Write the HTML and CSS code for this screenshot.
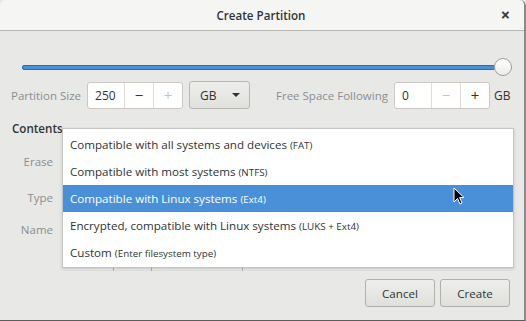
FILE: index.html
```html
<!DOCTYPE html>
<html lang="en">
<head>
  <meta charset="UTF-8" />
  <title>Create Partition</title>
  <link rel="stylesheet" href="styles.css">
</head>
<body>
  <div class="window">
    <div class="titlebar">
      <span class="title">Create Partition</span>
      <span class="close">&#x2715;</span>
    </div>

    <div class="content">
      <div class="slider">
        <div class="track"></div>
        <div class="thumb"></div>
      </div>

      <div class="size-row">
        <span class="label">Partition Size</span>
        <div class="spin">
          <span class="value">250</span>
          <span class="spin-btn">&minus;</span>
          <span class="spin-btn off">+</span>
        </div>
        <div class="combo">GB <span class="arrow"></span></div>
        <span class="label free">Free Space Following</span>
        <div class="spin">
          <span class="value">0</span>
          <span class="spin-btn off">&minus;</span>
          <span class="spin-btn">+</span>
        </div>
        <span class="unit">GB</span>
      </div>

      <div class="contents">
        <div class="heading">Contents</div>
        <div class="form">
          <span class="label">Erase</span>
          <div class="field"><div class="entry"></div></div>
          <span class="label">Type</span>
          <div class="field"><div class="entry"></div></div>
          <span class="label">Name</span>
          <div class="field"><div class="entry"></div></div>
        </div>

        <!-- type dropdown -->
        <div class="menu">
          <div class="item">Compatible with all systems and devices <small>(FAT)</small></div>
          <div class="item">Compatible with most systems <small>(NTFS)</small></div>
          <div class="item selected">Compatible with Linux systems <small>(Ext4)</small></div>
          <div class="item">Encrypted, compatible with Linux systems <small>(LUKS + Ext4)</small></div>
          <div class="item">Custom <small>(Enter filesystem type)</small></div>
          <i class="tick t1"></i><i class="tick t2"></i><i class="tick t3"></i>
          <svg class="cursor" width="12" height="19" viewBox="0 0 12 19">
            <path d="M1 1 L1 15 L4.5 11.5 L7 17 L9 16 L6.6 10.6 L11 10.6 Z" fill="#000" stroke="#fff" stroke-width="1" stroke-linejoin="round"/>
          </svg>
        </div>
      </div>

      <div class="actions">
        <button class="btn">Cancel</button>
        <button class="btn">Create</button>
      </div>
    </div>
  </div>
</body>
</html>
```

FILE: styles.css
```css
body {
  margin: 0;
  font-family: 'Open Sans', 'DejaVu Sans', sans-serif;
  font-size: 11.5px;
  color: #2e3436;
  background: #e8e8e7;
}

.window {
  width: 524px;
  height: 320px;
  display: flex;
  flex-direction: column;
  background: #e8e8e7;
  border-right: 2px solid #8a8a89;
  border-bottom: 1px solid #5c5c5c;
  border-radius: 6px 6px 0 0;
  overflow: hidden;
}

.titlebar {
  height: 30px;
  flex: none;
  display: flex;
  align-items: center;
  justify-content: center;
  position: relative;
  background: #f5f5f4;
  border-bottom: 1px solid #b6b6b3;
}

.title {
  font-weight: 600;
  font-size: 11.6px;
  color: #2e3436;
  margin-left: -2px;
}

.close {
  position: absolute;
  right: 14px;
  top: 7px;
  font-size: 11px;
  font-weight: bold;
  color: #2e3436;
  -webkit-text-stroke: 0.6px #2e3436;
}

.content {
  flex: 1;
  display: flex;
  flex-direction: column;
  padding: 0 10px 0 11px;
  position: relative;
}

/* slider */
.slider {
  height: 20px;
  margin: 26px 2px 0 11px;
  display: flex;
  align-items: center;
}

.track {
  flex: 1;
  height: 3px;
  background: #4a90d9;
  border: 1px solid #2a6bb5;
  border-radius: 2px;
}

.thumb {
  width: 16px;
  height: 16px;
  border-radius: 50%;
  margin-left: -1px;
  background: linear-gradient(#ffffff, #ececeb);
  border: 1px solid #9d9d9b;
}

.size-row {
  display: flex;
  align-items: center;
  margin-top: 4px;
  height: 28px;
  white-space: nowrap;
}

.label {
  color: #8b8e8f;
  white-space: nowrap;
}

.size-row .label {
  margin-right: 6px;
  flex: none;
}

.size-row .free {
  margin-left: 26px;
  margin-right: 6px;
}

.spin {
  display: flex;
  flex: none;
  height: 27px;
  width: 96px;
  background: #fff;
  border: 1px solid #cdc7c2;
  border-radius: 3px;
  box-sizing: border-box;
}

.spin .value {
  flex: 1;
  padding-left: 7px;
  line-height: 25px;
  font-size: 12px;
}

.spin-btn {
  width: 28px;
  text-align: center;
  line-height: 24px;
  font-size: 15px;
  border-left: 1px solid #e0ddd9;
}

.spin-btn.off {
  color: #c5c5c4;
}

.combo {
  margin-left: 6px;
  width: 61px;
  height: 28px;
  flex: none;
  box-sizing: border-box;
  padding-left: 10px;
  display: flex;
  align-items: center;
  justify-content: space-between;
  padding-right: 9px;
  font-size: 12px;
  background: linear-gradient(#eeeeec, #e0e0dd);
  border: 1px solid #b6b6b3;
  border-radius: 3px;
}

.arrow {
  width: 0;
  height: 0;
  border-left: 4px solid transparent;
  border-right: 4px solid transparent;
  border-top: 4px solid #2e3436;
}

.unit {
  margin-left: 4px;
  font-size: 12px;
}

/* contents */
.contents {
  position: relative;
  margin-top: 12px;
}

.heading {
  font-weight: 600;
  font-size: 11.6px;
  margin-left: 1px;
}

.form {
  display: grid;
  grid-template-columns: 42px 1fr;
  grid-template-rows: 37px 35px 28px;
  column-gap: 10px;
  align-items: center;
  margin-top: 7px;
}

.form .label {
  text-align: right;
}

.field {
  height: 28px;
}

.entry {
  height: 26px;
  background: #fff;
  border: 1px solid #cdc7c2;
  border-radius: 3px;
}

.menu {
  position: absolute;
  left: 51px;
  top: 7px;
  width: 450px;
  padding: 2px 0 1px;
  background: #fff;
  border: 1px solid #c4c4c1;
  box-shadow: 0 1px 3px rgba(0, 0, 0, 0.15);
}

.item {
  height: 27px;
  line-height: 27px;
  padding-left: 7px;
  font-size: 11.6px;
  color: #2e3436;
}

.item small {
  font-size: 9.8px;
}

.item.selected {
  background: #4a90d9;
  color: #fff;
}

.tick {
  position: absolute;
  top: 100%;
  width: 1px;
  height: 4px;
  background: #a8a8a6;
}

.t1 { left: 50px; }
.t2 { left: 88px; }
.t3 { left: 179px; }

.cursor {
  position: absolute;
  left: 390px;
  top: 58px;
}

/* buttons */
.actions {
  display: flex;
  justify-content: flex-end;
  gap: 5px;
  margin-top: auto;
  margin-bottom: 13px;
  margin-right: 4px;
}

.btn {
  width: 70px;
  height: 28px;
  font-family: inherit;
  font-size: 11.6px;
  color: #2e3436;
  background: linear-gradient(#eeeeec, #dfdfdc);
  border: 1px solid #b0b0ad;
  border-radius: 3px;
}
```
